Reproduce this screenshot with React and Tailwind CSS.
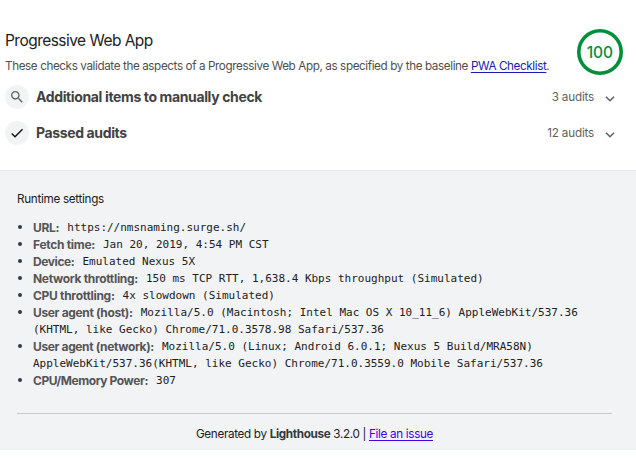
const settings = [
  { label: 'URL:', tracking: 'tracking-[-0.3px]', lines: ['https://nmsnaming.surge.sh/'] },
  { label: 'Fetch time:', tracking: 'tracking-[-0.3px]', lines: ['Jan 20, 2019, 4:54 PM CST'] },
  { label: 'Device:', tracking: 'tracking-[-0.4px]', lines: ['Emulated Nexus 5X'] },
  { label: 'Network throttling:', tracking: 'tracking-[-0.32px]', lines: ['150 ms TCP RTT, 1,638.4 Kbps throughput (Simulated)'] },
  { label: 'CPU throttling:', tracking: 'tracking-[-0.3px]', lines: ['4x slowdown (Simulated)'] },
  {
    label: 'User agent (host):',
    tracking: 'tracking-[-0.35px]',
    lines: ['Mozilla/5.0 (Macintosh; Intel Mac OS X 10_11_6) AppleWebKit/537.36', '(KHTML, like Gecko) Chrome/71.0.3578.98 Safari/537.36'],
  },
  {
    label: 'User agent (network):',
    tracking: 'tracking-[-0.37px]',
    lines: ['Mozilla/5.0 (Linux; Android 6.0.1; Nexus 5 Build/MRA58N)', 'AppleWebKit/537.36(KHTML, like Gecko) Chrome/71.0.3559.0 Mobile Safari/537.36'],
  },
  { label: 'CPU/Memory Power:', tracking: 'tracking-[-0.42px]', lines: ['307'] },
];

function SearchIcon() {
  return (
    <svg viewBox="0 0 24 24" className="size-4" fill="#5f6368">
      <path d="M15.5 14h-.79l-.28-.27C15.41 12.59 16 11.11 16 9.5 16 5.91 13.09 3 9.5 3S3 5.91 3 9.5 5.91 16 9.5 16c1.61 0 3.09-.59 4.23-1.57l.27.28v.79l5 4.99L20.49 19l-4.99-5zm-6 0C7.01 14 5 11.99 5 9.5S7.01 5 9.5 5 14 7.01 14 9.5 11.99 14 9.5 14z" />
    </svg>
  );
}

function CheckIcon() {
  return (
    <svg viewBox="0 0 24 24" className="size-4" fill="#111111">
      <path d="M9 16.17L4.83 12l-1.42 1.41L9 19 21 7l-1.41-1.41z" />
    </svg>
  );
}

function AuditGroup({ icon, title, count }) {
  return (
    <div className="flex h-9 items-center pr-5 pl-[5px]">
      <span className="flex size-6 items-center justify-center rounded-full bg-[#f1f3f4]">{icon}</span>
      <h2 className="ml-[7px] text-[14px] leading-5 font-bold tracking-[-0.37px] text-[#424242]">{title}</h2>
      <span className="ml-auto text-[11.7px] leading-[18px] tracking-[-0.2px] text-[#616161]">{count}</span>
      <svg viewBox="0 0 12 8" className="mt-1 ml-[10px] h-2 w-3" fill="none" stroke="#616161" strokeWidth="1.6">
        <path d="M2 1.7l4 4 4-4" />
      </svg>
    </div>
  );
}

export default function App() {
  return (
    <div className="h-[459px] w-[636px] overflow-hidden bg-white font-['Inter',sans-serif] text-[12px] text-[#212121]">
      <main className="h-[170px] pt-[29px]">
        <header className="flex h-[50px] justify-between pr-[13px] pl-[5px]">
          <div>
            <h1 className="text-[15.5px] leading-[23px] tracking-[-0.53px]">Progressive Web App</h1>
            <p className="text-[11.7px] leading-7 tracking-[-0.4px] whitespace-nowrap text-[#4f4f4f]">
              These checks validate the aspects of a Progressive Web App, as specified by the baseline{' '}
              <a className="text-[#1b1bb8] underline underline-offset-2">PWA Checklist</a>.
            </p>
          </div>
          <svg viewBox="0 0 46 46" className="size-[46px] shrink-0">
            <circle cx="23" cy="23" r="21.2" fill="none" stroke="#008f39" strokeWidth="3.6" />
            <text x="22.8" y="28.6" textAnchor="middle" fill="#008f39" className="text-[15.5px] font-medium tracking-[-0.2px]">
              100
            </text>
          </svg>
        </header>
        <AuditGroup icon={<SearchIcon />} title="Additional items to manually check" count="3 audits" />
        <AuditGroup icon={<CheckIcon />} title="Passed audits" count="12 audits" />
      </main>
      <footer className="h-[280px] border-t border-[#e4e6e8] bg-[#f1f3f4] pt-[19px] pr-6 pl-[17px]">
        <h3 className="text-[11.7px] leading-[18px] tracking-[-0.3px]">Runtime settings</h3>
        <ul className="mt-[11px] leading-[17px]">
          {settings.map(({ label, tracking, lines }) => (
            <li key={label} className="flex">
              <span className="mt-[6px] mr-[11px] ml-px size-1 shrink-0 rounded-full bg-[#303b46]" />
              <div className="whitespace-nowrap">
                <div className="flex">
                  <strong className={`font-bold text-[#555555] ${tracking}`}>{label}</strong>
                  <span className="ml-2 font-['DejaVu_Sans_Mono',monospace] text-[11px]">{lines[0]}</span>
                </div>
                {lines[1] && <div className="font-['DejaVu_Sans_Mono',monospace] text-[11px]">{lines[1]}</div>}
              </div>
            </li>
          ))}
        </ul>
        <div className="mt-[24px] border-t border-[#c7c9cb] pt-[11px] text-center text-[11.7px] leading-[18px] tracking-[-0.33px]">
          Generated by <strong className="font-bold text-[#303b3b]">Lighthouse</strong> 3.2.0 |{' '}
          <a className="text-[#4400ee] underline underline-offset-2">File an issue</a>
        </div>
      </footer>
    </div>
  );
}
